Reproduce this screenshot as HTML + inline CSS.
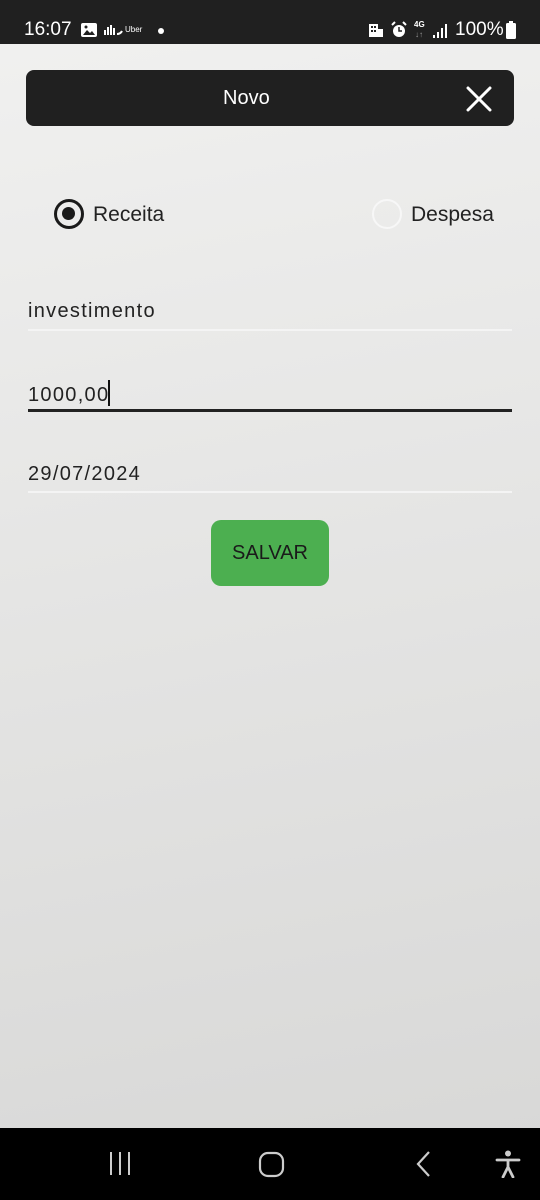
<!DOCTYPE html>
<html><head><meta charset="utf-8">
<style>
*{margin:0;padding:0;box-sizing:border-box}
html,body{width:540px;height:1200px;overflow:hidden}
body{font-family:"Liberation Sans","DejaVu Sans",sans-serif;background:linear-gradient(170deg,#f1f1f0 0%,#e4e4e3 50%,#d7d7d6 100%);position:relative;color:#222}
.sb{position:absolute;top:0;left:0;width:540px;height:44px;background:#202020;color:#fff}
.hdr{position:absolute;left:26px;top:70px;width:488px;height:56px;background:#202020;border-radius:8px;color:#fff;font-size:20px;line-height:56px}
.radio{position:absolute;top:199px;width:30px;height:30px;border-radius:50%}
.lbl{position:absolute;top:203px;font-size:21px;color:#222}
.field{position:absolute;left:28px;width:484px;font-size:20px;color:#222;letter-spacing:1.3px}
.btn{position:absolute;left:211px;top:520px;width:118px;height:66px;background:#4caf50;border-radius:10px;font-size:20px;color:#1a1a1a;text-align:center;line-height:66px}
.nav{position:absolute;left:0;top:1128px;width:540px;height:72px;background:#000}
</style></head><body>
<div class="sb">
<div style="position:absolute;left:24px;top:19px;font-size:19px">16:07</div>
<svg style="position:absolute;left:80px;top:22px" width="18" height="16"><rect x="1" y="1" width="16" height="14" rx="2" fill="#fff"/><path d="M3 13l4-5 3 3 2-2 3 4z" fill="#202020"/><circle cx="6" cy="5" r="1.5" fill="#202020"/></svg>
<svg style="position:absolute;left:103px;top:24px" width="20" height="12"><path d="M2 11V6M5 11V3M8 11V1M11 11V4M14 10c2 0 4-1 5-3" stroke="#fff" stroke-width="2" fill="none"/></svg>
<div style="position:absolute;left:125px;top:25px;font-size:8px">Uber</div>
<div style="position:absolute;left:158px;top:28px;width:6px;height:6px;border-radius:50%;background:#fff"></div>
<svg style="position:absolute;left:368px;top:22px" width="16" height="16"><path d="M1 2h9v13H1zM10 7h5v8h-5z" fill="#fff"/><rect x="3" y="4" width="2" height="2" fill="#202020"/><rect x="6" y="4" width="2" height="2" fill="#202020"/><rect x="3" y="8" width="2" height="2" fill="#202020"/><rect x="6" y="8" width="2" height="2" fill="#202020"/></svg>
<svg style="position:absolute;left:390px;top:21px" width="18" height="18"><circle cx="9" cy="10" r="6" fill="#fff"/><path d="M9 6v4h3" stroke="#202020" stroke-width="1.5" fill="none"/><path d="M2 4l3-3M16 4l-3-3" stroke="#fff" stroke-width="2"/></svg>
<div style="position:absolute;left:414px;top:20px;font-size:8px;font-weight:bold">4G</div>
<div style="position:absolute;left:415px;top:30px;font-size:8px;color:#999">↓↑</div>
<svg style="position:absolute;left:433px;top:24px" width="18" height="14"><rect x="0" y="11" width="2" height="3" fill="#fff"/><rect x="4" y="8" width="2" height="6" fill="#fff"/><rect x="8" y="4" width="2" height="10" fill="#fff"/><rect x="12" y="0" width="2" height="14" fill="#fff"/></svg>
<div style="position:absolute;left:455px;top:19px;font-size:19px">100%</div>
<svg style="position:absolute;left:505px;top:21px" width="12" height="18"><rect x="4" y="0" width="4" height="2" fill="#fff"/><rect x="1" y="2" width="10" height="16" rx="1.5" fill="#fff"/></svg>
</div>

<div class="hdr"><span style="position:absolute;left:197px">Novo</span>
<svg style="position:absolute;right:22px;top:16px" width="26" height="26"><path d="M2 2L24 24M24 2L2 24" stroke="#fff" stroke-width="3" stroke-linecap="round"/></svg>
</div>

<div class="radio" style="left:54px;border:3.5px solid #1a1a1a"><div style="position:absolute;left:5px;top:5px;width:13px;height:13px;border-radius:50%;background:#1a1a1a"></div></div>
<div class="lbl" style="left:93px">Receita</div>
<div class="radio" style="left:372px;border:2.5px solid #f7f7f7"></div>
<div class="lbl" style="left:411px">Despesa</div>

<div class="field" style="top:300px">investimento</div>
<div style="position:absolute;left:28px;top:329px;width:484px;height:2px;background:#f4f4f4"></div>
<div class="field" style="top:380px">1000,00<span style="display:inline-block;width:2px;height:26px;background:#111;vertical-align:-5px;margin-left:-1px"></span></div>
<div style="position:absolute;left:28px;top:409px;width:484px;height:3px;background:#222"></div>
<div class="field" style="top:463px">29/07/2024</div>
<div style="position:absolute;left:28px;top:491px;width:484px;height:2px;background:#f4f4f4"></div>

<div class="btn">SALVAR</div>

<div class="nav">
<svg style="position:absolute;left:108px;top:23px" width="26" height="26"><path d="M3 1v23M12 1v23M21 1v23" stroke="#ccc" stroke-width="2"/></svg>
<svg style="position:absolute;left:258px;top:23px" width="28" height="28"><rect x="2" y="2" width="23" height="23" rx="8" stroke="#ccc" stroke-width="2.2" fill="none"/></svg>
<svg style="position:absolute;left:414px;top:22px" width="18" height="28"><path d="M15 2L4 14l11 12" stroke="#ccc" stroke-width="2.2" fill="none"/></svg>
<svg style="position:absolute;left:495px;top:22px" width="26" height="28"><circle cx="13" cy="3.5" r="3" fill="#ccc"/><path d="M2 10h22M13 10v8M13 17l-5 10M13 17l5 10" stroke="#ccc" stroke-width="2.8" fill="none" stroke-linecap="round"/></svg>
</div>
</body></html>
